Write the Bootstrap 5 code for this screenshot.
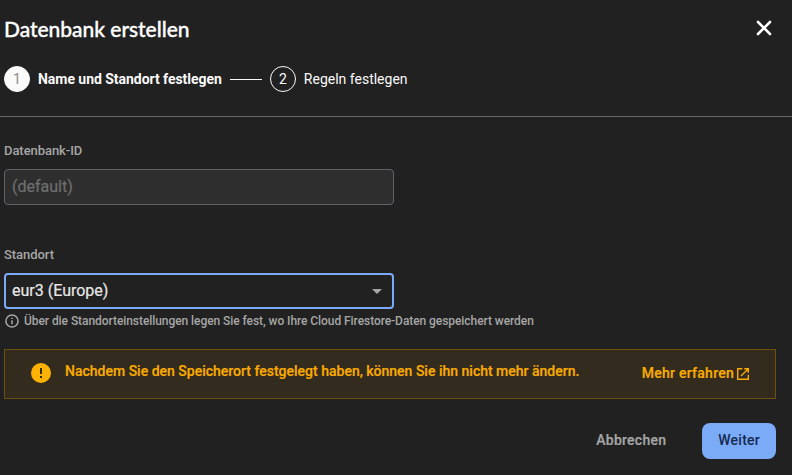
<!DOCTYPE html>
<html lang="de" data-bs-theme="dark">
<head>
<meta charset="utf-8">
<meta name="viewport" content="width=device-width, initial-scale=1">
<title>Datenbank erstellen</title>
<link href="https://cdn.jsdelivr.net/npm/bootstrap@5.3.0/dist/css/bootstrap.min.css" rel="stylesheet">
<style>
body { background: #212121; color: #fafafa; font-family: Roboto, "Liberation Sans", sans-serif; font-size: 14px; line-height: 20px; overflow: hidden; }
svg { display: block; flex: none; }
.dialog-head { height: 117px; padding: 16px 16px 0 4px; border-bottom: 1px solid #666; }
.dialog-title { font-family: Lato, sans-serif; font-size: 21px; line-height: 25px; height: 26px; font-weight: 500; letter-spacing: -.03px; -webkit-text-stroke: .35px currentColor; }
.dialog-close { width: 24px; height: 24px; color: #fff; }
.step-list { margin-top: 24px; }
.step-dot { width: 26px; height: 26px; border: 1px solid #fafafa; line-height: 24px; }
.step-dot.current { background: #fafafa; color: #8a8a8a; }
.step-label { line-height: 26px; }
.step-label.fw-bold { letter-spacing: -.035px; }
.step-line { width: 32px; height: 1px; background: #fafafa; margin-top: 1px; }
.dialog-body { padding: 24px 16px 0 4px; }
.field { width: 390px; }
.field-label { font-size: 13px; font-weight: 500; color: #a6a6a6; margin-bottom: 8px; letter-spacing: -.06px; }
.field .form-control, .field .picker { height: 36px; padding: 0 7px; font-size: 16px; border-radius: 4px; -webkit-text-stroke: .2px; }
.field .form-control:disabled { background: #2e2e2e; border: 1px solid #5f6368; padding-bottom: 2px; }
.field .form-control::placeholder { color: #6f6f6f; opacity: 1; }
.field .picker { background: #212121; border: 2px solid #7baaf7; color: #e8e8e8; padding: 0 6px; line-height: 32px; }
.field-gap { margin-top: 40px; }
.hint { color: #a6a6a6; font-size: 12px; font-weight: 500; margin-top: 2px; padding-left: 1px; gap: 5px; letter-spacing: -.065px; }
.notice { height: 50px; margin-top: 18px; padding: 0 26px 2px; background: #332b1e; border: 1px solid #6e500f; border-radius: 0; color: #f9ab00; font-weight: 500; -webkit-text-stroke: .2px; }
.notice-text { margin: -5px 0 0 14px; letter-spacing: 0; }
.notice-link { color: #f9ab00; letter-spacing: .25px; gap: 3px; }
.notice-link svg { margin-top: 2px; }
.action-row { margin-top: 24px; gap: 20px; }
.action-row .btn { height: 36px; padding: 0 16px 2px; border: 0; border-radius: 8px; font-size: 14px; font-weight: 500; letter-spacing: .25px; }
.action-row .btn-cancel { color: #a6a6a6; -webkit-text-stroke: .2px; }
.btn-next, .btn-next:hover { background: #7baaf7; color: #13294f; }
</style>
</head>
<body>
<header class="dialog-head">
  <div class="d-flex justify-content-between">
    <h1 class="dialog-title mb-0">Datenbank erstellen</h1>
    <button class="dialog-close btn p-0 border-0" type="button" aria-label="Schließen">
      <svg width="24" height="24" viewBox="0 0 24 24" stroke="currentColor" stroke-width="2.6" stroke-linecap="round"><path d="M6 6l12 12M18 6L6 18"/></svg>
    </button>
  </div>
  <div class="step-list d-flex align-items-center gap-2">
    <span class="step-dot current rounded-circle text-center">1</span>
    <span class="step-label fw-bold">Name und Standort festlegen</span>
    <span class="step-line"></span>
    <span class="step-dot rounded-circle text-center">2</span>
    <span class="step-label">Regeln festlegen</span>
  </div>
</header>
<main class="dialog-body">
  <div class="field">
    <label class="field-label d-block" for="dbid">Datenbank-ID</label>
    <input class="form-control" id="dbid" placeholder="(default)" disabled>
  </div>
  <div class="field field-gap">
    <div class="field-label">Standort</div>
    <div class="picker d-flex align-items-center justify-content-between" role="combobox">
      <span>eur3 (Europe)</span>
      <svg class="me-1" width="10" height="5" viewBox="0 0 10 5"><path d="M0 0h10L5 5z" fill="#a6a6a6"/></svg>
    </div>
  </div>
  <div class="hint d-flex align-items-center">
    <svg width="14" height="14" viewBox="0 0 14 14" fill="none" stroke="currentColor" stroke-width="1.5"><circle cx="7" cy="7" r="6.1"/><path d="M7 6.3v4M7 3.7v1.4"/></svg>
    <span>Über die Standorteinstellungen legen Sie fest, wo Ihre Cloud Firestore-Daten gespeichert werden</span>
  </div>
  <div class="notice d-flex align-items-center">
    <svg width="20" height="20" viewBox="0 0 20 20"><circle cx="10" cy="10" r="10" fill="#ffb300"/><path d="M9 5h2v6H9zM9 13h2v2H9z" fill="#332b1e"/></svg>
    <span class="notice-text">Nachdem Sie den Speicherort festgelegt haben, können Sie ihn nicht mehr ändern.</span>
    <a class="notice-link ms-auto d-flex align-items-center text-decoration-none" href="#">Mehr erfahren
      <svg width="12" height="12" viewBox="0 0 12 12" fill="none" stroke="currentColor" stroke-width="1.4"><path d="M5.3.7H.7v10.6h10.6V6.7M7.3.7h4v4M11 1L4 8"/></svg>
    </a>
  </div>
  <div class="action-row d-flex justify-content-end">
    <button class="btn btn-cancel" type="button">Abbrechen</button>
    <button class="btn btn-next" type="button">Weiter</button>
  </div>
</main>
<script src="https://cdn.jsdelivr.net/npm/bootstrap@5.3.0/dist/js/bootstrap.bundle.min.js"></script>
</body>
</html>
